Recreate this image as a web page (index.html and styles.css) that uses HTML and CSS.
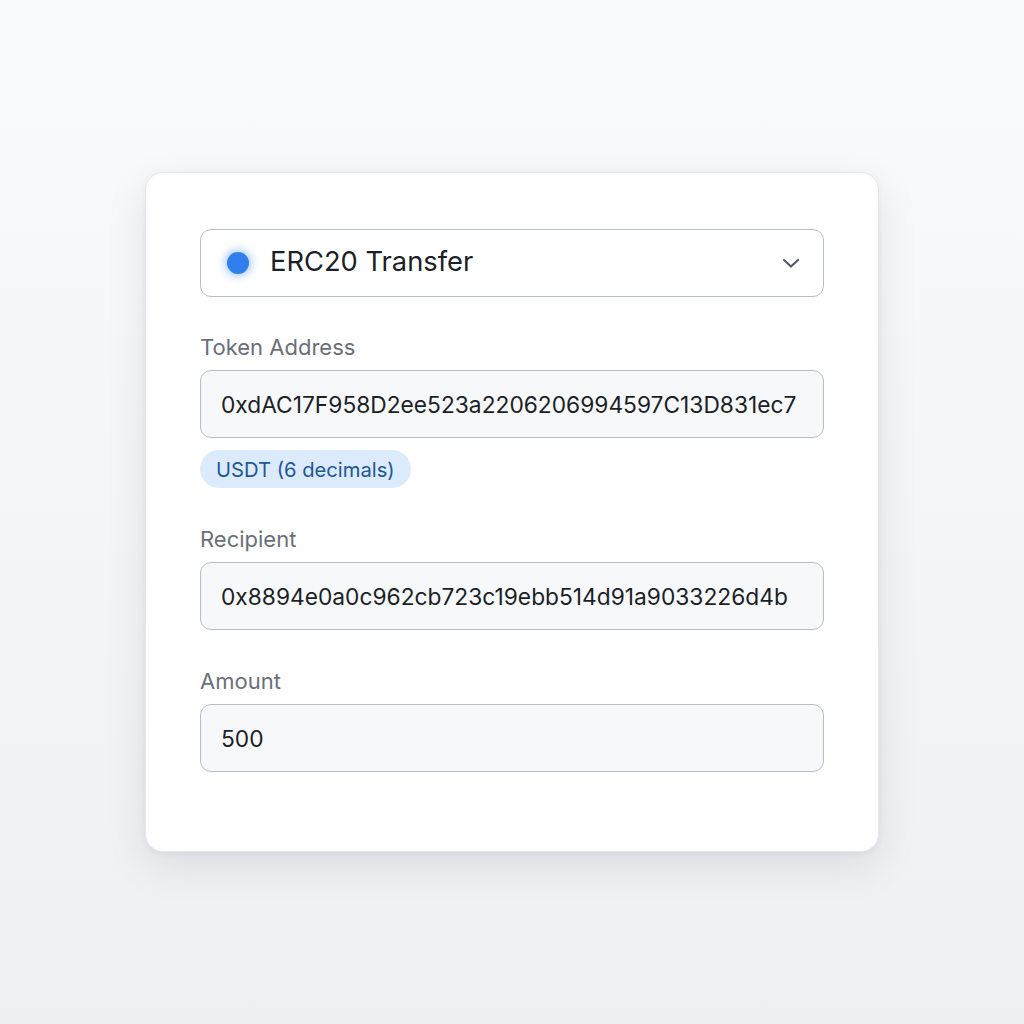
FILE: index.html
```html
<!DOCTYPE html>
<html lang="en">
<head>
<meta charset="utf-8">
<title>ERC20 Transfer</title>
<link rel="stylesheet" href="styles.css">
</head>
<body>
<main class="stage">
  <section class="card">
    <div class="select">
      <span class="dot"></span>
      <span class="select-text">ERC20 Transfer</span>
      <svg class="chevron" width="20" height="12" viewBox="0 0 20 12" aria-hidden="true">
        <path d="M3 3 L10 9.5 L17 3" fill="none" stroke="#555b66" stroke-width="2.2" stroke-linecap="round" stroke-linejoin="round"/>
      </svg>
    </div>

    <div class="field field-first">
      <label class="label">Token Address</label>
      <div class="input">0xdAC17F958D2ee523a2206206994597C13D831ec7</div>
      <div class="chip-row"><span class="chip">USDT (6 decimals)</span></div>
    </div>

    <div class="field">
      <label class="label">Recipient</label>
      <div class="input">0x8894e0a0c962cb723c19ebb514d91a9033226d4b</div>
    </div>

    <div class="field">
      <label class="label">Amount</label>
      <div class="input">500</div>
    </div>
  </section>
</main>
</body>
</html>
```
FILE: styles.css
```css
* { box-sizing: border-box; }
html, body { margin: 0; height: 100%; }
body {
  font-family: Inter, "Noto Sans", "Liberation Sans", sans-serif;
  background: linear-gradient(180deg, #fafbfc 0%, #f3f4f7 60%, #eef0f3 100%);
}
.stage {
  width: 1024px;
  height: 1024px;
  padding-top: 172px;
  padding-left: 145px;
}
.card {
  width: 734px;
  height: 680px;
  background: #ffffff;
  border: 1px solid #e6e8ec;
  border-radius: 18px;
  box-shadow: 0 14px 40px rgba(30, 40, 60, 0.10), 0 2px 6px rgba(30, 40, 60, 0.05);
  padding: 56px 54px 0 54px;
  display: flex;
  flex-direction: column;
}
.select {
  height: 68px;
  border: 1.5px solid #b9bdc4;
  border-radius: 11px;
  background: #ffffff;
  display: flex;
  align-items: center;
  padding: 2px 22px 0 26px;
}
.dot {
  width: 22px;
  height: 22px;
  border-radius: 50%;
  background: #2f80ed;
  box-shadow: 0 0 8px 2px rgba(47, 128, 237, 0.45);
  flex: none;
  margin-top: -3px;
}
.select-text {
  margin-left: 21px;
  font-size: 27.3px;
  line-height: 32px;
  margin-top: -4px;
  color: #1b1f27;
  flex: 1;
}
.chevron { flex: none; margin-top: -3px; }
.field {
  display: flex;
  flex-direction: column;
  margin-top: 38px;
}
.field-first { margin-top: 37px; }
.label {
  font-size: 22px;
  line-height: 26px;
  color: #6a6f79;
  margin-bottom: 10px;
}
.input {
  height: 68px;
  border: 1.5px solid #b9bdc4;
  border-radius: 11px;
  background: #f7f8fa;
  display: flex;
  align-items: center;
  padding: 0 20px;
  font-size: 22.75px;
  color: #1b1f27;
  white-space: nowrap;
  overflow: hidden;
}
.chip-row {
  display: flex;
  margin-top: 12px;
}
.chip {
  height: 38px;
  display: inline-flex;
  align-items: center;
  padding: 0 16px;
  border-radius: 19px;
  background: #dcebfb;
  color: #1e5796;
  font-size: 20.2px;
}
```
